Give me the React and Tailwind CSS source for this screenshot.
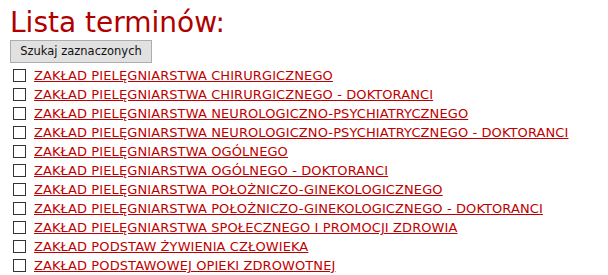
import React from "react";

const items = [
  "ZAKŁAD PIELĘGNIARSTWA CHIRURGICZNEGO",
  "ZAKŁAD PIELĘGNIARSTWA CHIRURGICZNEGO - DOKTORANCI",
  "ZAKŁAD PIELĘGNIARSTWA NEUROLOGICZNO-PSYCHIATRYCZNEGO",
  "ZAKŁAD PIELĘGNIARSTWA NEUROLOGICZNO-PSYCHIATRYCZNEGO - DOKTORANCI",
  "ZAKŁAD PIELĘGNIARSTWA OGÓLNEGO",
  "ZAKŁAD PIELĘGNIARSTWA OGÓLNEGO - DOKTORANCI",
  "ZAKŁAD PIELĘGNIARSTWA POŁOŻNICZO-GINEKOLOGICZNEGO",
  "ZAKŁAD PIELĘGNIARSTWA POŁOŻNICZO-GINEKOLOGICZNEGO - DOKTORANCI",
  "ZAKŁAD PIELĘGNIARSTWA SPOŁECZNEGO I PROMOCJI ZDROWIA",
  "ZAKŁAD PODSTAW ŻYWIENIA CZŁOWIEKA",
  "ZAKŁAD PODSTAWOWEJ OPIEKI ZDROWOTNEJ",
];

export default function App() {
  return (
    <div className="bg-white h-[275px] overflow-hidden px-[10px] pt-[7px] font-['DejaVu_Sans',sans-serif]">
      <h1 className="text-[28px] leading-[31px] text-[#b00000]">Lista terminów:</h1>
      <button className="h-[23px] w-[142px] border border-[#adadad] bg-[#e1e1e1] text-[11.5px] text-[#111]">
        Szukaj zaznaczonych
      </button>
      <ul className="mt-[3px]">
        {items.map((name) => (
          <li key={name} className="flex items-center h-[19px]">
            <span className="ml-[3px] w-[13px] h-[13px] border border-[#333] bg-white shrink-0" />
            <a href="#" className="ml-[8px] text-[13px] tracking-[0.1px] text-[#c00000] underline whitespace-nowrap">
              {name}
            </a>
          </li>
        ))}
      </ul>
    </div>
  );
}
